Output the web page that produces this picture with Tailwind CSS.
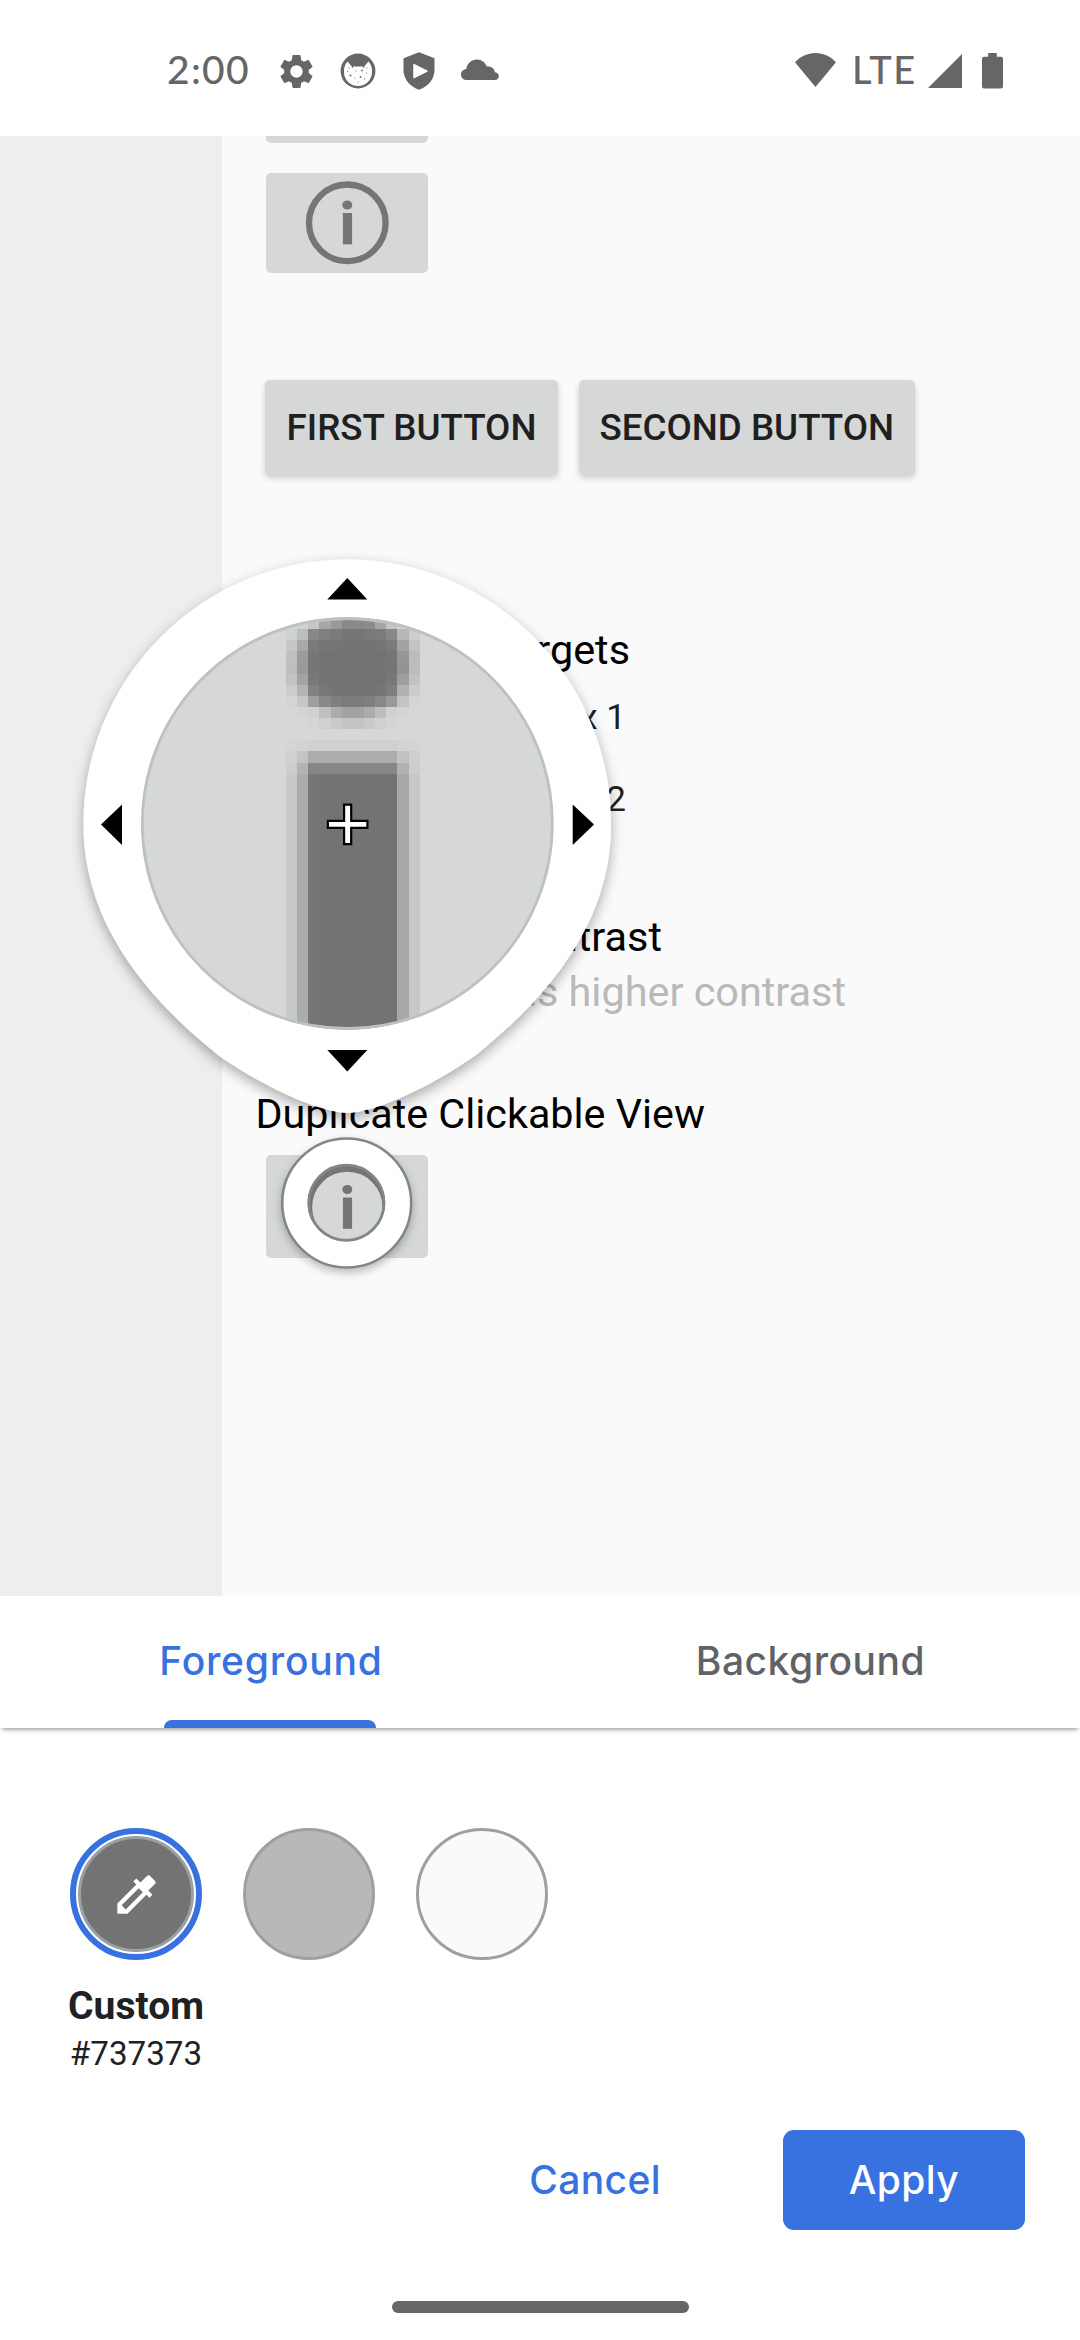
<!DOCTYPE html>
<html lang="en">
<head>
<meta charset="utf-8">
<title>Contrast color picker</title>
<script src="https://cdn.jsdelivr.net/npm/@tailwindcss/browser@4"></script>
</head>
<body class="w-[1080px] h-[2340px] overflow-hidden bg-white font-['Roboto',sans-serif]">
<div class="relative flex flex-col w-[1080px] h-[2340px]">

  <!-- Status bar -->
  <header class="flex items-start justify-between h-[136px] pt-[44px] pl-[167px] pr-[77px] text-[#666]">
    <div class="flex items-center h-[50px]">
      <span class="w-[109px] font-['Lato',sans-serif] font-medium text-[39px] leading-[50px] tracking-[1.300px]">2:00</span>
      <svg class="w-[41px] h-[41px] mt-[4px]" viewBox="0 0 24 24" fill="currentColor"><path d="M19.14 12.94c.04-.3.06-.61.06-.94s-.02-.64-.07-.94l2.03-1.58c.18-.14.23-.41.12-.61l-1.92-3.32c-.12-.22-.37-.29-.59-.22l-2.39.96c-.5-.38-1.03-.7-1.62-.94l-.36-2.54c-.04-.24-.24-.41-.48-.41h-3.84c-.24 0-.43.17-.47.41l-.36 2.54c-.59.24-1.13.57-1.62.94l-2.39-.96c-.22-.08-.47 0-.59.22L2.74 8.87c-.12.21-.08.47.12.61l2.03 1.58c-.05.3-.09.63-.09.94s.02.64.07.94l-2.03 1.58c-.18.14-.23.41-.12.61l1.92 3.32c.12.22.37.29.59.22l2.39-.96c.5.38 1.03.7 1.62.94l.36 2.54c.05.24.24.41.48.41h3.84c.24 0 .44-.17.47-.41l.36-2.54c.59-.24 1.13-.56 1.62-.94l2.39.96c.22.08.47 0 .59-.22l1.92-3.32c.12-.22.07-.47-.12-.61l-2.01-1.58zM12 15.6c-1.98 0-3.6-1.62-3.6-3.6s1.62-3.6 3.6-3.6 3.6 1.62 3.6 3.6-1.62 3.6-3.6 3.6z"/></svg>
      <svg class="w-[36px] h-[36px] ml-[23px] mt-[4px]" viewBox="0 0 36 36">
        <circle cx="18" cy="18" r="17.400" fill="#666"/>
        <path d="M7.500 8.500 L11.500 13 Q18 11 24.500 13 L28.500 8.500 Q32.500 13 32 19 A14 14 0 0 1 4 19 Q3.500 13 7.500 8.500Z" fill="#fff"/>
        <path d="M9 7 Q18 3 27 7 L24.500 12.500 L24 15.500 L22.500 13.500 L13.500 13.500 L12 15.500 L11.500 12.500Z" fill="#666"/>
        <g fill="#666"><circle cx="9" cy="15" r=".6"/><circle cx="27" cy="15" r=".6"/><circle cx="10.500" cy="22.500" r="1"/><circle cx="16" cy="18" r=".6"/><circle cx="22" cy="17.500" r=".9"/><circle cx="26.500" cy="20" r=".6"/><circle cx="20.500" cy="24" r=".9"/><circle cx="15" cy="25" r=".5"/><circle cx="24.500" cy="26" r=".6"/><circle cx="18" cy="29" r=".6"/><circle cx="7.500" cy="18.500" r=".5"/></g>
      </svg>
      <svg class="w-[32px] h-[38px] ml-[27px] mt-[4px]" viewBox="0 0 32 38"><path d="M16 .3 31.500 6.200V18c0 9.500-7 17-15.500 19.700C7.500 35 .5 27.500.5 18V6.200Z" fill="#666"/><path d="M11 12.700v13L24 19.200Z" fill="#fff" stroke="#fff" stroke-width="1.500" stroke-linejoin="round"/></svg>
      <svg class="w-[38px] h-[22px] ml-[26px] mt-[1px]" viewBox="0 0 38 22" fill="#666"><path d="M5.500 21a5.500 5.500 0 0 1-.2-11C6 4.500 10.500.5 16 .5c4.600 0 8.200 2.900 9.800 7 4.400-.6 7.700 2 8.200 5.800 2.300.3 3.800 1.800 3.800 3.900 0 2.200-1.700 3.800-3.900 3.800Z"/></svg>
    </div>
    <div class="flex items-center h-[50px]">
      <svg class="w-[41px] h-[34px] mt-[2px]" viewBox="0 0 41 34" fill="#666"><path d="M0 9.200C5.500 3.500 12.500 0 20.500 0S35.500 3.500 41 9.200L20.500 34Z"/></svg>
      <span class="ml-[16px] w-[65px] font-['Lato',sans-serif] text-[38px] leading-[50px] tracking-[1.300px] font-medium">LTE</span>
      <svg class="w-[34px] h-[34px] ml-[11px] mt-[3px]" viewBox="0 0 34 34" fill="#666"><path d="M34 0V34H0Z"/></svg>
      <svg class="w-[21px] h-[36px] ml-[20px] mt-[4px]" viewBox="0 0 21 36" fill="#666"><path d="M6.200 0h8.600v3.800H19a2 2 0 0 1 2 2V33.500a2 2 0 0 1-2 2H2a2 2 0 0 1-2-2V5.800a2 2 0 0 1 2-2H6.200Z"/></svg>
    </div>
  </header>

  <!-- Captured screen -->
  <main class="relative flex h-[1460px] overflow-hidden bg-[#fafafa]">
    <div class="w-[222px] shrink-0 bg-[#eeeeee]"></div>
    <div class="flex flex-col pl-[32px] text-black">
      <div class="ml-[12px] w-[162px] h-[7px] rounded-b-[5px] bg-[#d6d8d7]"></div>
      <div class="ml-[12px] mt-[30px] w-[162px] h-[100px] rounded-[5px] bg-[#d6d8d7] flex items-center justify-center">
        <svg class="w-[84px] h-[84px]" viewBox="0 0 84 84"><circle cx="42.300" cy="41.800" r="38.300" fill="none" stroke="#757575" stroke-width="6.300"/><ellipse cx="42.300" cy="24" rx="5" ry="4.600" fill="#757575"/><path d="M37.900 32h9.200v31.300h-9.200z" fill="#757575"/></svg>
      </div>
      <div class="flex gap-[20.500px] mt-[107px] ml-[11px] text-[36.750px] font-medium text-[#1f1f1f]">
        <div class="flex items-center justify-center w-[293px] h-[95px] pt-[1px] rounded-[5px] bg-[#d6d8d7] shadow-[0_3px_6px_rgba(0,0,0,0.18)] whitespace-nowrap">FIRST BUTTON</div>
        <div class="flex items-center justify-center w-[336.500px] h-[95px] pt-[1px] rounded-[5px] bg-[#d6d8d7] shadow-[0_3px_6px_rgba(0,0,0,0.18)] whitespace-nowrap">SECOND BUTTON</div>
      </div>
      <div class="mt-[150px] w-[376px] text-right text-[41.400px] leading-[50px] whitespace-nowrap">Small Touch Targets</div>
      <div class="mt-[18px] w-[372px] text-right text-[35px] leading-[50px] text-[#1f1f1f]">Checkbox 1</div>
      <div class="mt-[32px] w-[372px] text-right text-[35px] leading-[50px] text-[#1f1f1f]">Checkbox 2</div>
      <div class="mt-[87px] w-[408px] text-right text-[41.400px] leading-[50px]">Text Contrast</div>
      <div class="mt-[5px] w-[592px] text-right text-[41.400px] leading-[50px] text-[#b9b9b9] whitespace-nowrap">This text has higher contrast</div>
      <div class="mt-[72px] pl-[1.500px] text-[41.300px] leading-[50px] whitespace-nowrap">Duplicate Clickable View</div>
      <div class="ml-[12px] mt-[16px] w-[162px] h-[103px] rounded-[5px] bg-[#d6d8d7] flex items-center justify-center">
        <svg class="w-[84px] h-[84px]" viewBox="0 0 84 84"><circle cx="42.300" cy="42" r="38.300" fill="none" stroke="#757575" stroke-width="6.300"/><ellipse cx="42.300" cy="24.500" rx="5" ry="4.600" fill="#757575"/><path d="M37.900 32.500h9.200v31.300h-9.200z" fill="#757575"/></svg>
      </div>
    </div>

    <!-- Magnifier and target ring, floating over the capture -->
    <svg class="absolute left-0 top-0 w-[700px] h-[1200px]" viewBox="0 136 700 1200">
      <defs>
        <clipPath id="lens"><circle cx="347.300" cy="823.500" r="206"/></clipPath>
        <clipPath id="ringhole"><path clip-rule="evenodd" d="M250 1100h200v220H250ZM346.400 1163.900a38.800 38.800 0 1 1-.01 0Z"/></clipPath>
        <filter id="drop" x="-10%" y="-10%" width="120%" height="120%"><feDropShadow dx="0" dy="5" stdDeviation="6.500" flood-color="#000" flood-opacity=".33"/></filter>
        <filter id="ringdrop" x="-20%" y="-20%" width="140%" height="140%"><feDropShadow dx="0" dy="4" stdDeviation="4" flood-color="#000" flood-opacity=".25"/></filter>
      </defs>
      <path filter="url(#drop)" fill="#fff" d="M347.300 559.500C493 559.500 611 678 611 824C611 919 553 993 476 1055C425 1091 370 1113 347.300 1113C324 1113 269 1091 218 1055C141 993 83.500 919 83.500 824C83.500 678 201.600 559.500 347.300 559.500Z"/>
      <g clip-path="url(#lens)">
        <path d="M140 616h415v415H140z" fill="#d6d8d7"/>
        <g id="pixels" shape-rendering="crispEdges"></g>
      </g>
      <circle cx="347.300" cy="823.500" r="205" fill="none" stroke="#bdc1c6" stroke-width="2.800"/>
      <path d="M347.300 578 367.300 599.500H327.300ZM347.300 1071.500 367.300 1050H327.300ZM101 824.500 122 804.500V845ZM594 824.500 572.700 804.500V845Z" fill="#000"/>
      <path d="M343 803.500h9.300v16.200h16.200v9.300h-16.200v16.200H343V829H326.800v-9.300H343Z" fill="#000"/>
      <path d="M345.200 805.700h4.900v16.200h16.200v4.900h-16.200v16.200h-4.900v-16.200H329v-4.900h16.200Z" fill="#fff"/>
      <g clip-path="url(#ringhole)"><circle filter="url(#ringdrop)" cx="346.700" cy="1203" r="64.500" fill="#fff" stroke="#80868b" stroke-width="2.600"/></g>
      <circle cx="346.400" cy="1202.700" r="37.600" fill="none" stroke="#80868b" stroke-width="2.700"/>
    </svg>
  </main>

  <!-- Tabs -->
  <nav class="relative z-10 flex h-[132px] bg-white font-['Inter',sans-serif] font-medium text-[39px] shadow-[0_4px_4px_-2px_rgba(0,0,0,0.35)]">
    <div class="flex flex-col items-center justify-between w-[540px] text-[#3871e0]">
      <span class="pt-[40px] leading-[50px] pl-[2px] tracking-[0.800px]">Foreground</span>
      <span class="w-[212px] h-[8px] rounded-t-[8px] bg-[#3871e0]"></span>
    </div>
    <div class="flex justify-center w-[540px] text-[#5f6368]"><span class="pt-[40px] pl-[1px] leading-[50px] tracking-[0.500px]">Background</span></div>
  </nav>

  <!-- Swatches -->
  <section class="flex gap-[41px] pt-[100px] pl-[70px] h-[402px] text-[#202124]">
    <div class="flex flex-col items-center w-[132px]">
      <div class="flex items-center justify-center w-[132px] h-[132px] shrink-0 rounded-full border-[6px] border-[#3871e0] bg-white">
        <div class="flex items-center justify-center w-[116px] h-[116px] rounded-full border-[3px] border-[#9aa0a6] bg-[#737373]">
          <svg class="w-[51px] h-[51px]" viewBox="0 0 24 24" fill="#fff"><path d="M20.710 5.630l-2.340-2.340c-.39-.39-1.020-.39-1.410 0l-3.120 3.120-1.930-1.910-1.410 1.410 1.420 1.420L3 16.250V21h4.750l8.920-8.920 1.420 1.420 1.410-1.410-1.920-1.920 3.120-3.120c.4-.4.4-1.030.01-1.420zM6.920 19L5 17.080l8.060-8.060 1.920 1.920L6.920 19z"/></svg>
        </div>
      </div>
      <div class="mt-[21px] text-[39px] leading-[50px] font-bold">Custom</div>
      <div class="text-[33.200px] leading-[46px]">#737373</div>
    </div>
    <div class="w-[132px] h-[132px] rounded-full border-[3px] border-[#9aa0a6] bg-[#b8b8b8]"></div>
    <div class="w-[132px] h-[132px] rounded-full border-[3px] border-[#9aa0a6] bg-[#fafafa]"></div>
  </section>

  <!-- Actions -->
  <footer class="flex justify-end items-center gap-[122px] h-[100px] pr-[55px] font-['Inter',sans-serif] font-medium text-[39px] tracking-[0.400px] leading-[50px]">
    <span class="pb-[1px] text-[#3871e0]">Cancel</span>
    <span class="flex items-center justify-center w-[242px] h-[100px] pb-[1px] rounded-[11px] bg-[#3871e0] text-white">Apply</span>
  </footer>
  <div class="mt-[71px] mx-auto w-[297px] h-[12px] rounded-full bg-[#666]"></div>
</div>

<script>
  // Enlarged pixels inside the lens: one list of grey levels per row
  const xs = [286,297,308,319,331,342,353,364,375,386,397,409,420];
  const ys = [616,629,640,651,663,674,685,696,707,718,729,740,751,763,774,1032];
  const rows = [
    'd4 d0 c6 a6 97 88 88 8b a4 c4 d2 d4','d0 bc 88 7f 7a 76 76 79 7c 88 b6 cc',
    'c6 a8 7a 75 75 73 73 73 75 7b a2 c2','bf 9a 77 73 73 73 73 73 73 75 96 bb',
    'bd 99 76 73 73 73 73 73 73 75 94 bb','c2 a2 78 73 73 73 73 73 73 78 9e c1',
    'cb b3 82 77 73 73 73 73 76 7e b0 cb','d3 c6 9e 89 7f 7b 7b 7f 88 99 c2 d3',
    'd6 d3 d0 be ab a2 a2 ab bc d0 d3 d6','d6 d6 d4 cf c8 c3 c3 c9 cf d4 d6 d6',
    'd6 d6 d6 d6 d6 d6 d6 d6 d6 d6 d6 d6','d4 d2 cf cf cf cf cf cf cf cf d2 d4',
    'cf c3 ab ab ab ab ab ab ab ab c1 ce','cc b3 86 86 86 86 86 86 86 86 b0 cc',
    'c8 ab 76 73 73 73 73 73 73 73 a7 c7'];
  let out = '';
  rows.forEach((row, r) => row.split(' ').forEach((hex, c) => {
    const v = parseInt(hex, 16), g = v > 150 ? v + 2 : v;
    out += `<rect x="${xs[c]}" y="${ys[r]}" width="${xs[c+1]-xs[c]}" height="${ys[r+1]-ys[r]}" fill="rgb(${v},${g},${g})"/>`;
  }));
  document.getElementById('pixels').innerHTML = out;
</script>
</body>
</html>
